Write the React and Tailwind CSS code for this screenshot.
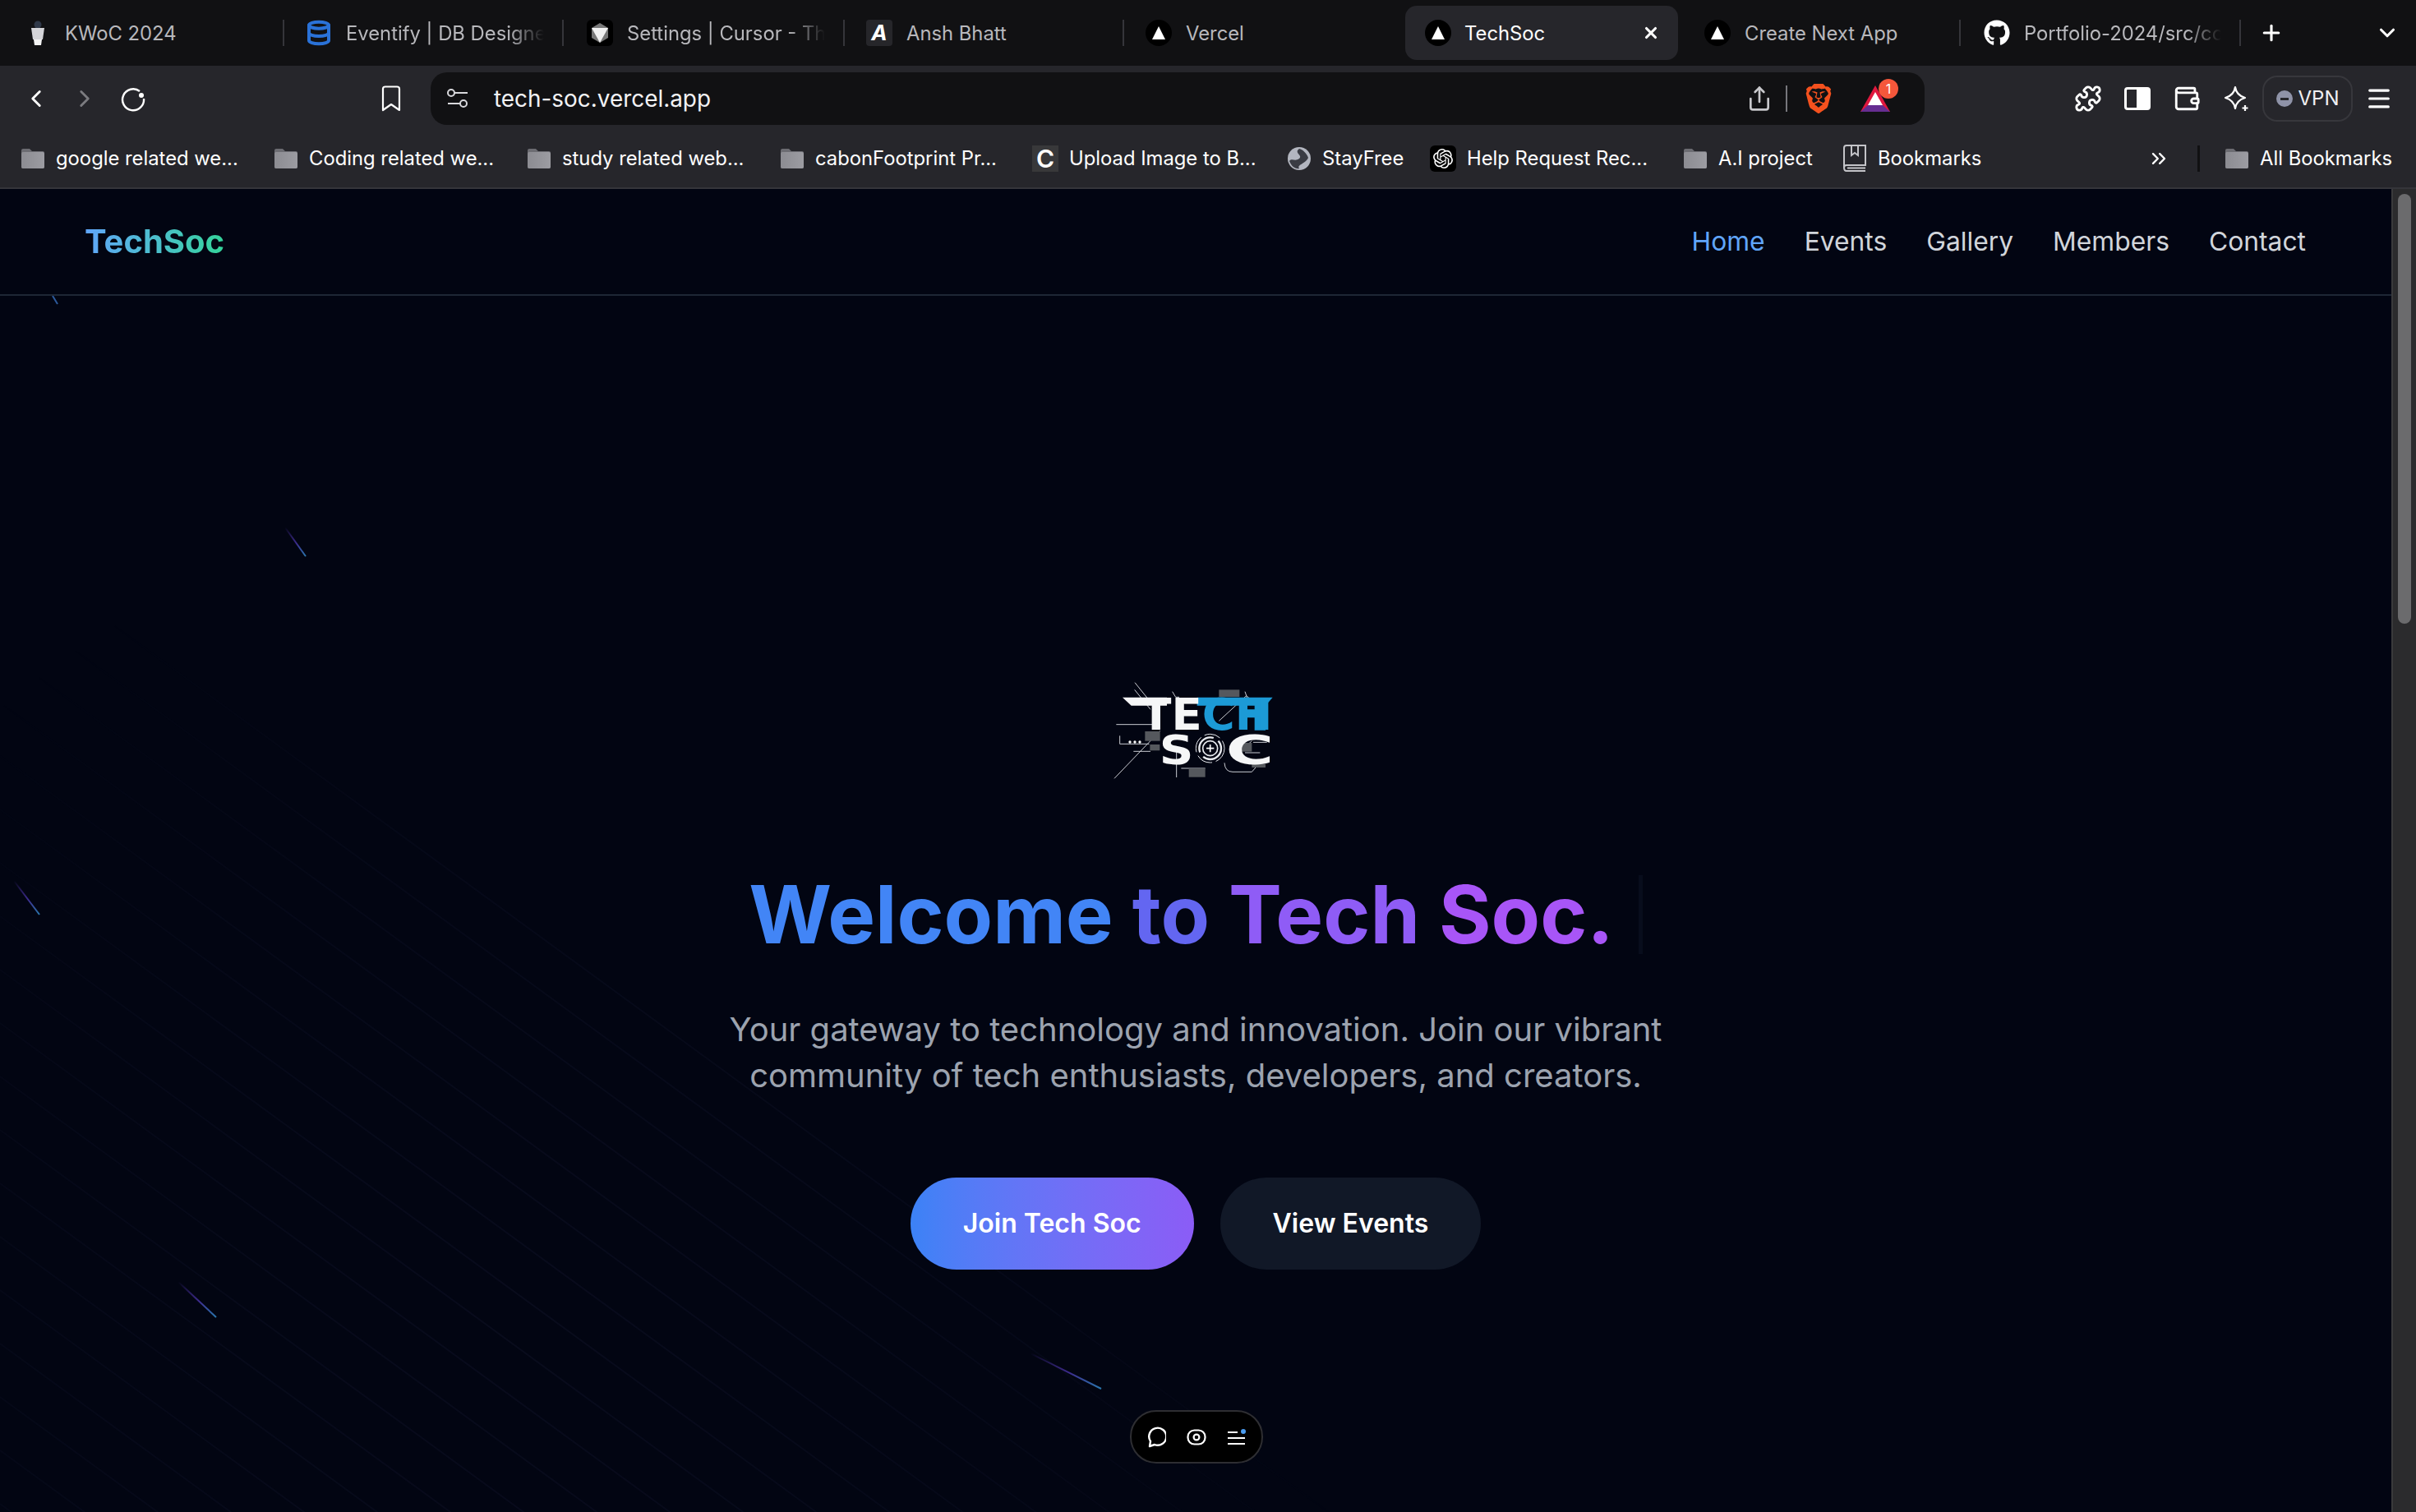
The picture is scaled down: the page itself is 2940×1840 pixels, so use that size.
import React from "react";
import { ChevronLeft, ChevronRight, Share, Puzzle, Wallet, Menu, ChevronsRight, Plus, X, ChevronDown, Database } from "lucide-react";
import { FaGithub } from "react-icons/fa";
import { SiBrave, SiOpenai } from "react-icons/si";

const VercelIcon = () => (
  <span className="flex h-[32px] w-[32px] shrink-0 items-center justify-center rounded-full bg-black">
    <svg width="20" height="18" viewBox="0 0 20 18"><path d="M10 1 L18 17 L2 17 Z" fill="#fff" /></svg>
  </span>
);
const KwocIcon = () => (
  <svg className="shrink-0" width="32" height="32" viewBox="0 0 32 32">
    <circle cx="16" cy="6" r="4.5" fill="#2f3848" />
    <path d="M8 10 H24 L22 24 H10 Z" fill="#d4d4d8" />
    <path d="M11 24 H21 L20 31 H12 Z" fill="#f4f4f4" />
  </svg>
);
const CursorIcon = () => (
  <span className="flex h-[32px] w-[32px] shrink-0 items-center justify-center rounded-md bg-black">
    <svg width="22" height="26" viewBox="0 0 22 26"><path d="M11 1 L21 7 V19 L11 25 L1 19 V7 Z" fill="#777" /><path d="M1 7 L21 7 L11 25 Z" fill="#f0f0f0" /></svg>
  </span>
);
const AIcon = () => (
  <span className="flex h-[32px] w-[32px] shrink-0 items-center justify-center rounded bg-[#26262a] text-[26px] font-bold italic leading-none text-white">A</span>
);
const Folder = () => (
  <svg className="shrink-0" width="30" height="26" viewBox="0 0 30 26">
    <defs><linearGradient id="fg" x1="0" y1="0" x2="1" y2="0"><stop offset="0" stopColor="#8c8c92" /><stop offset="1" stopColor="#9c9ca2" /></linearGradient></defs>
    <path d="M1 3 Q1 1 3 1 H11 L14 4 H27 Q29 4 29 6 V23 Q29 25 27 25 H3 Q1 25 1 23 Z" fill="#6c6c72" />
    <path d="M1 7 Q1 5 3 5 H27 Q29 5 29 7 V23 Q29 25 27 25 H3 Q1 25 1 23 Z" fill="url(#fg)" />
  </svg>
);
const BookIcon = () => (
  <svg className="shrink-0" width="30" height="34" viewBox="0 0 30 34" fill="none" stroke="#c4c4c8" strokeWidth="2">
    <path d="M2 28 V4 Q2 1 5 1 H28 V25 H5 Q2 25 2 28 Q2 32 5 32 H28 M2 28 Q2 28 2 28" />
    <path d="M11 1 V13 L15 10 L19 13 V1" />
    <path d="M6 28.5 H28" />
  </svg>
);

const tabs = [
  { t: "KWoC 2024", i: <KwocIcon />, w: "w-[340px] pl-[24px]" },
  { t: "Eventify | DB Designer", i: <Database size={32} strokeWidth={3} className="shrink-0 text-[#2a72d8]" />, w: "w-[340px] pl-[26px]", fade: true },
  { t: "Settings | Cursor - The AI", i: <CursorIcon />, w: "w-[342px] pl-[28px]", fade: true },
  { t: "Ansh Bhatt", i: <AIcon />, w: "w-[340px] pl-[26px]" },
  { t: "Vercel", i: <VercelIcon />, w: "w-[342px] pl-[26px]", none: true },
  { t: "TechSoc", active: true, i: <VercelIcon /> },
  { t: "Create Next App", i: <VercelIcon />, w: "w-[338px] pl-[26px]" },
  { t: "Portfolio-2024/src/components", i: <span className="flex h-[32px] w-[32px] shrink-0 items-center justify-center"><FaGithub size={32} color="#fff" /></span>, w: "w-[341px] pl-[28px]", fade: true },
];

const Tab = ({ tab }) => {
  if (tab.active) {
    return (
      <div className="flex h-[66px] w-[332px] shrink-0 items-center gap-[16px] rounded-[14px] bg-[#26262b] pl-[24px] pr-[22px] text-white">
        {tab.i}
        <span className="flex-1 pt-[2px] text-[23.8px]">{tab.t}</span>
        <X size={22} strokeWidth={3.4} className="text-white" />
      </div>
    );
  }
  return (
    <div className={`relative flex h-[32px] shrink-0 items-center gap-[17px] pr-[24px] ${tab.w}`}>
      {tab.i}
      <span className={`overflow-hidden whitespace-nowrap pt-[2px] text-[23.8px] text-[#b8b8bc] ${tab.fade ? "[mask-image:linear-gradient(to_right,#000_82%,transparent)]" : ""}`}>{tab.t}</span>
      {!tab.none && <span className="absolute right-0 top-0 h-[32px] w-[2px] bg-[#35353a]" />}
    </div>
  );
};

const bookmarks = [
  { t: "google related we...", w: "w-[308px]" },
  { t: "Coding related we...", w: "w-[308px]" },
  { t: "study related web...", w: "w-[308px]" },
  { t: "cabonFootprint Pr...", w: "w-[307px]" },
  { t: "Upload Image to B...", w: "w-[310px]", i: <span className="flex h-[32px] w-[32px] shrink-0 items-center justify-center bg-[#38383a] text-[30px] font-semibold leading-none text-white">C</span> },
  { t: "StayFree", w: "w-[174px]", i: <svg className="shrink-0" width="30" height="30" viewBox="0 0 30 30"><circle cx="15" cy="15" r="14" fill="#b3b6c0" /><path d="M15 3 C8 8 20 11 15 15 C10 19 6 14 3 18 C6 26 12 28 15 27 C12 22 22 22 26 14 C24 8 19 4 15 3Z" fill="#3a3c44" /></svg> },
  { t: "Help Request Rec...", w: "w-[308px]", i: <span className="flex h-[32px] w-[32px] shrink-0 items-center justify-center rounded-md bg-black"><SiOpenai size={24} color="#fff" /></span> },
  { t: "A.I project", w: "w-[194px]" },
  { t: "Bookmarks", w: "", i: <BookIcon /> },
];

const lineYs = [];
for (let y = 660; y < 1840; y += 65) lineYs.push(y);

const Streak = ({ id, x1, y1, x2, y2 }) => (
  <>
    <linearGradient id={id} gradientUnits="userSpaceOnUse" x1={x1} y1={y1} x2={x2} y2={y2}>
      <stop offset="0" stopColor="#4c2fa8" stopOpacity="0" />
      <stop offset="0.55" stopColor="#3d2c8e" />
      <stop offset="1" stopColor="#2a78ae" />
    </linearGradient>
    <line x1={x1} y1={y1} x2={x2} y2={y2} stroke={`url(#${id})`} strokeWidth="2" />
  </>
);

const Backdrop = () => (
  <svg className="pointer-events-none absolute left-0 top-0 h-[1610px] w-[2910px]" viewBox="0 230 2910 1610">
    <defs>
      <radialGradient id="lineFade" gradientUnits="userSpaceOnUse" cx="650" cy="1620" r="1000">
        <stop offset="0" stopColor="#fff" stopOpacity="1" />
        <stop offset="0.6" stopColor="#fff" stopOpacity="0.6" />
        <stop offset="1" stopColor="#fff" stopOpacity="0" />
      </radialGradient>
      <mask id="lm"><rect x="0" y="230" width="2910" height="1610" fill="url(#lineFade)" /></mask>
    </defs>
    <g mask="url(#lm)" stroke="#090c1d" strokeWidth="2">
      {lineYs.map((y) => (
        <line key={y} x1="0" y1={y} x2="2000" y2={y + 1460} />
      ))}
    </g>
    <Streak id="s1" x1={347} y1={642} x2={372} y2={677} />
    <Streak id="s2" x1={17} y1={1072} x2={48} y2={1113} />
    <Streak id="s3" x1={217} y1={1560} x2={263} y2={1603} />
    <Streak id="s4" x1={1254} y1={1647} x2={1340} y2={1690} />
    <line x1="64" y1="360" x2="70" y2="370" stroke="#2c5a9c" strokeWidth="2" />
  </svg>
);

const LogoArt = () => (
  <svg width="260" height="180" viewBox="15 0 780 540" className="shrink-0">
    <g stroke="#c9ccd2" strokeWidth="3" fill="none">
      <path d="M183 92 L262 190" />
      <path d="M182 118 L240 190" />
      <path d="M108 442 L275 268" />
      <path d="M115 245 H250" />
      <path d="M128 286 V316 H235" />
      <path d="M178 343 H240" />
      <path d="M335 345 V438" />
      <path d="M352 405 H440" />
      <path d="M320 125 L332 145 H345" />
      <path d="M585 125 L592 145 L575 160" />
      <path d="M490 232 L590 140 L640 182" />
      <path d="M510 385 Q512 418 540 418 H610 L630 395" />
      <path d="M565 345 L610 305" />
      <path d="M585 348 H640" />
      <path d="M615 310 H665" />
    </g>
    <g fill="#55585d">
      <rect x="490" y="118" width="75" height="26" />
      <rect x="220" y="270" width="55" height="35" />
      <rect x="238" y="318" width="36" height="22" />
      <rect x="380" y="405" width="60" height="32" />
      <rect x="560" y="312" width="50" height="32" />
      <rect x="610" y="390" width="50" height="12" />
    </g>
    <circle cx="165" cy="309" r="5" fill="#fff" />
    <circle cx="183" cy="309" r="5" fill="#fff" />
    <circle cx="201" cy="309" r="5" fill="#fff" />
    <path d="M138 146 H300 V176 H170 Z" fill="#f5f6f7" />
    <path d="M410 146 H686 L660 176 V266 H620 V220 H565 V190 H620 V176 H410 Z" fill="#1c9ad6" />
    <text x="205" y="265" textLength="480" lengthAdjust="spacingAndGlyphs" fontFamily="'DejaVu Sans', sans-serif" fontWeight="700" fontSize="160">
      <tspan fill="#f5f6f7">TE</tspan><tspan fill="#1c9ad6">CH</tspan>
    </text>
    <text x="272" y="389" textLength="125" lengthAdjust="spacingAndGlyphs" fontFamily="'DejaVu Sans', sans-serif" fontWeight="700" fontSize="150" fill="#f5f6f7">S</text>
    <text x="515" y="389" textLength="175" lengthAdjust="spacingAndGlyphs" fontFamily="'DejaVu Sans', sans-serif" fontWeight="700" fontSize="150" fill="#f5f6f7">C</text>
    <g fill="none" stroke="#e8eaee">
      <circle cx="458" cy="332" r="52" strokeWidth="3" strokeDasharray="60 14" />
      <circle cx="458" cy="332" r="40" strokeWidth="7" strokeDasharray="90 20" />
      <circle cx="458" cy="332" r="27" strokeWidth="5" />
    </g>
    <path d="M458 318 V346 M444 332 H472" stroke="#fff" strokeWidth="5" />
  </svg>
);

export default function App() {
  return (
    <div className="flex h-[1840px] w-[2940px] flex-col overflow-hidden bg-[#020512] [font-family:Inter,sans-serif]">
      {/* tab strip */}
      <div className="flex h-[80px] shrink-0 items-center bg-[#111113] pl-[6px] pr-[20px]">
        {tabs.slice(0, 6).map((t) => <Tab key={t.t} tab={t} />)}
        <div className="w-[6px] shrink-0" />
        {tabs.slice(6).map((t) => <Tab key={t.t} tab={t} />)}
        <Plus size={30} strokeWidth={2.5} className="ml-[22px] text-white" />
        <ChevronDown size={30} strokeWidth={2.5} className="ml-auto text-white" />
      </div>

      {/* toolbar */}
      <div className="flex h-[80px] shrink-0 items-center bg-[#26262b] pl-[27px] pr-[22px]">
        <ChevronLeft size={34} strokeWidth={2} className="text-white" />
        <ChevronRight size={34} strokeWidth={2} className="ml-[25px] text-[#7c7c80]" />
        <svg width="32" height="32" viewBox="0 0 32 32" fill="none" stroke="#fff" strokeWidth="2.4" className="ml-[26px]">
          <path d="M24 7 A13 13 0 1 0 29 16" />
          <circle cx="26" cy="12" r="3" fill="#fff" stroke="none" />
        </svg>
        <svg width="24" height="32" viewBox="0 0 24 32" fill="none" stroke="#fff" strokeWidth="2.2" className="ml-[286px]">
          <path d="M2 4 Q2 1.5 5 1.5 H19 Q22 1.5 22 4 V30 L12 23 L2 30 Z" strokeLinejoin="round" />
        </svg>
        <div className="ml-[36px] flex h-[64px] w-[1818px] items-center rounded-[20px] bg-[#111113] pl-[20px] pr-[42px]">
          <svg width="26" height="24" viewBox="0 0 26 24" fill="none" stroke="#d8d8dc" strokeWidth="2">
            <circle cx="5" cy="5" r="4" /><path d="M9 5 H25" />
            <circle cx="20" cy="18" r="4" /><path d="M1 18 H16" />
          </svg>
          <span className="ml-[31px] pt-[2px] text-[27.9px] text-[#f2f2f4]">tech-soc.vercel.app</span>
          <Share size={32} strokeWidth={2} className="ml-auto text-[#c8c8cc]" />
          <span className="ml-[16px] h-[32px] w-[2px] bg-[#77777c]" />
          <SiBrave size={36} color="#f4511e" className="ml-[20px]" />
          <span className="relative ml-[33px] h-[32px] w-[36px]">
            <svg width="36" height="32" viewBox="0 0 36 32">
              <path d="M18 0 L36 32 H0 Z" fill="#e0183f" />
              <path d="M18 8 L27 24 H9 Z" fill="#fff" />
              <path d="M0 32 L9 24 H27 L36 32 Z" fill="#662d91" />
            </svg>
            <span className="absolute right-[-10px] top-[-8px] flex h-[24px] w-[24px] items-center justify-center rounded-full bg-[#f4573b] text-[16px] leading-none text-white">1</span>
          </span>
        </div>
        <Puzzle size={34} strokeWidth={2} className="ml-[182px] text-white" />
        <span className="ml-[27px] flex h-[28px] w-[32px] justify-end rounded-[4px] border-[3px] border-white"><span className="h-full w-[14px] bg-white" /></span>
        <Wallet size={34} strokeWidth={2} className="ml-[27px] text-white" />
        <svg width="32" height="32" viewBox="0 0 32 32" fill="none" stroke="#fff" strokeWidth="2.2" className="ml-[28px]">
          <path d="M14 2 C15 9 19 13 26 15 C19 17 15 21 14 28 C13 21 9 17 2 15 C9 13 13 9 14 2 Z" strokeLinejoin="round" />
          <path d="M26 24 V31 M22.5 27.5 H29.5" />
        </svg>
        <div className="ml-[15px] flex h-[56px] w-[110px] items-center justify-center gap-[7px] rounded-[18px] border-2 border-[#37373c]">
          <span className="flex h-[20px] w-[20px] items-center justify-center rounded-full bg-[#8f93a8]"><span className="h-[3px] w-[10px] bg-[#26262b]" /></span>
          <span className="text-[24px] text-[#f0f0f2]">VPN</span>
        </div>
        <Menu size={34} strokeWidth={2.2} className="ml-[15px] text-white" />
      </div>

      {/* bookmarks */}
      <div className="flex h-[70px] shrink-0 items-center border-b-2 border-[#35353a] bg-[#26262b] pb-[2px] pl-[25px] pr-[29px]">
        {bookmarks.map((b) => (
          <div key={b.t} className={`flex shrink-0 items-center gap-[13px] text-[23.8px] text-white ${b.w}`}>
            {b.i || <Folder />}
            <span className="whitespace-nowrap">{b.t}</span>
          </div>
        ))}
        <ChevronsRight size={28} strokeWidth={2} className="ml-auto text-white" />
        <span className="ml-[33px] h-[32px] w-[3px] bg-[#101012]" />
        <div className="ml-[30px] flex items-center gap-[13px] text-[23.8px] text-white">
          <Folder />
          <span className="whitespace-nowrap">All Bookmarks</span>
        </div>
      </div>

      {/* page + scrollbar */}
      <div className="flex min-h-0 flex-1">
        <div className="relative min-w-0 flex-1 bg-[#020512]">
          <Backdrop />
          <nav className="relative flex h-[130px] items-center justify-between border-b-2 border-[#1e2735] pl-[103px] pr-[104px]">
            <span className="bg-gradient-to-r from-[#60a5fa] to-[#34d399] bg-clip-text text-[40px] font-bold text-transparent">TechSoc</span>
            <div className="flex items-center gap-[48px] text-[31.8px] font-normal text-[#d1d5db]">
              <span className="text-[#60a5fa]">Home</span>
              <span>Events</span>
              <span>Gallery</span>
              <span>Members</span>
              <span>Contact</span>
            </div>
          </nav>
          <main className="relative flex flex-col items-center pt-[440px]">
            <LogoArt />
            <h1 className="mt-[85px] flex items-stretch text-[97.2px] font-bold leading-[96px]">
              <span><span className="text-[#4285f6]">Welcome </span><span className="text-[#6366f1]">to </span><span className="text-[#8f5cf6]">Tech </span><span className="text-[#a855f7]">Soc.</span></span>
              <span className="ml-[30px] w-[5px] bg-[#080d1c]" />
            </h1>
            <p className="mt-[64px] max-w-[1200px] text-center text-[40px] leading-[56px] text-[#9ca3af]">
              Your gateway to technology and innovation. Join our vibrant community of tech enthusiasts, developers, and creators.
            </p>
            <div className="mt-[96px] flex gap-[32px]">
              <button className="flex h-[112px] items-center rounded-full bg-gradient-to-r from-[#3b82f6] to-[#8b5cf6] px-[64px] text-[32px] font-semibold text-white">Join Tech Soc</button>
              <button className="flex h-[112px] items-center rounded-full bg-[#111827] px-[64px] text-[32px] font-semibold text-white">View Events</button>
            </div>
          </main>
          <div className="absolute left-[1375px] top-[1486px] flex h-[65px] w-[162px] items-center justify-center gap-[25px] rounded-[32px] border-2 border-[#2e2e32] bg-black">
            <svg width="24" height="26" viewBox="0 0 24 26" fill="none" stroke="#fff" strokeWidth="2.4"><path d="M4 24 L5 18 A10.5 10.5 0 1 1 10 22 Z" strokeLinejoin="round" /></svg>
            <svg width="24" height="20" viewBox="0 0 24 20" fill="none" stroke="#fff" strokeWidth="2.2"><rect x="1.5" y="1.5" width="21" height="17" rx="8" /><circle cx="12" cy="10" r="3.4" /></svg>
            <svg width="24" height="20" viewBox="0 0 24 20" fill="none" stroke="#fff" strokeWidth="2.2"><path d="M1 4 H13 M1 11 H22 M1 18 H22" /><circle cx="20" cy="3" r="3" fill="#4a9cf0" stroke="none" /></svg>
          </div>
        </div>
        <div className="flex w-[30px] shrink-0 justify-center border-l-2 border-[#3a3a3c] bg-[#2b2b2d] pt-[6px]">
          <div className="h-[523px] w-[16px] rounded-full bg-[#6b6b6d]" />
        </div>
      </div>
    </div>
  );
}
